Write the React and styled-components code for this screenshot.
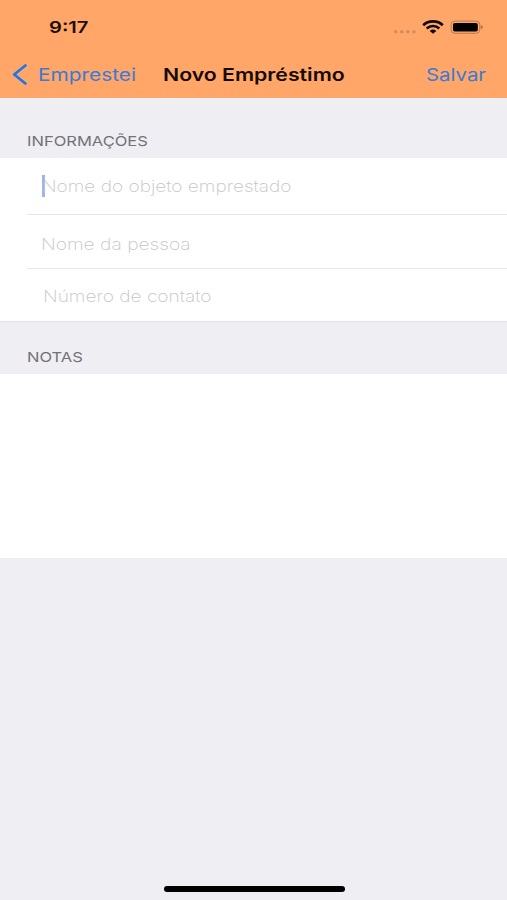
import React from "react";
import styled, { createGlobalStyle } from "styled-components";

const GlobalStyle = createGlobalStyle`
  * { box-sizing: border-box; }
  body { margin: 0; background: #efeef3; }
`;

const Screen = styled.main`
  display: flex;
  flex-direction: column;
  width: 507px;
  height: 900px;
  overflow: hidden;
  background: #efeef3;
  font-family: Inter, "Liberation Sans", sans-serif;
`;

const Header = styled.header`
  height: 98px;
  background: #ffa668;
  border-bottom: 1px solid #f3a678;
`;

const StatusBar = styled.div`
  display: flex;
  align-items: center;
  height: 54px;
  padding: 0 23px 0 49px;
`;

const NavBar = styled.nav`
  display: grid;
  grid-template-columns: 163px 263px 1fr;
  align-items: center;
  height: 41px;
`;

const Wide = styled.span`
  display: inline-block;
  white-space: nowrap;
  transform: scaleX(${(p) => p.$stretch});
  transform-origin: left center;
`;

const Clock = styled(Wide)`
  margin-right: auto;
  font-size: 16.5px;
  font-weight: 600;
  line-height: 20px;
  color: #1c0f06;
`;

const StatusIcons = styled.svg`
  display: block;
  width: 92px;
  height: 20px;
`;

const NavButton = styled.button`
  display: flex;
  align-items: center;
  gap: 10px;
  padding: 0 0 0 ${(p) => p.$inset || 0}px;
  border: 0;
  background: none;
  font: 400 17.5px/22px Inter, "Liberation Sans", sans-serif;
  color: #3a7bd5;
`;

const Chevron = styled.svg`
  display: block;
  width: 16px;
  height: 22px;
`;

const Title = styled.h1`
  margin: 0;
  font-size: 17.5px;
  font-weight: 600;
  line-height: 22px;
  color: #160b04;
`;

const SectionTitle = styled.h2`
  height: ${(p) => p.$height}px;
  margin: 0;
  padding: ${(p) => p.$top}px 0 0 27px;
  font-size: 13.6px;
  font-weight: 400;
  line-height: 18px;
  color: #737277;
`;

const Fields = styled.div`
  height: 164px;
  background: #fff;
  border-bottom: 1px solid #e2e2e5;
`;

const Field = styled.div`
  display: flex;
  align-items: center;
  height: ${(p) => p.$height}px;
  margin-left: 27px;
  padding: ${(p) => p.$drop || 0}px 0 0 ${(p) => p.$inset}px;
  border-bottom: ${(p) => (p.$last ? "0" : "1px solid #e8e8ea")};
`;

const Caret = styled.span`
  width: 3px;
  height: 22px;
  margin-right: -3px;
  background: #a3b3f0;
`;

const Placeholder = styled(Wide)`
  font-size: 16.5px;
  font-weight: 200;
  line-height: 22px;
  color: #c6c6c8;
`;

const Notes = styled.div`
  height: 184px;
  background: #fff;
`;

const HomeIndicator = styled.div`
  width: 181px;
  height: 6px;
  margin: auto 0 8px 164px;
  border-radius: 3px;
  background: #000;
`;

export default function App() {
  return (
    <>
      <GlobalStyle />
      <Screen>
        <Header>
          <StatusBar>
            <Clock $stretch={1.22}>9:17</Clock>
            <StatusIcons viewBox="0 0 92 20">
              <g fill="#d08c5a">
                <circle cx="3.7" cy="14.7" r="1.7" />
                <circle cx="9.8" cy="14.7" r="1.7" />
                <circle cx="15.9" cy="14.7" r="1.7" />
                <circle cx="22" cy="14.7" r="1.7" />
              </g>
              <g fill="none" stroke="#120904" strokeWidth="2.6">
                <path d="M31.2 8.2C36.5 3.1 45.5 3.1 50.8 8.2" />
                <path d="M34.7 11.5C38.2 8.2 43.8 8.2 47.3 11.5" />
              </g>
              <path d="M37.7 13.9Q41 11.3 44.3 13.9L41 16.8Z" fill="#120904" />
              <rect x="59.2" y="4.1" width="28.6" height="12.2" rx="3.6" fill="none" stroke="#b97a4d" />
              <rect x="61" y="6" width="24.8" height="8.6" rx="1.8" fill="#000" />
              <path d="M88.9 8.3Q90.8 9 90.8 10.2T88.9 12.1Z" fill="#a96c43" />
            </StatusIcons>
          </StatusBar>
          <NavBar>
            <NavButton $inset={12}>
              <Chevron viewBox="0 0 16 22">
                <path d="M13.4 1.5L2.2 10.5L13.4 19.5" fill="none" stroke="#1979ec" strokeWidth="2.7" strokeLinecap="round" strokeLinejoin="round" />
              </Chevron>
              <Wide $stretch={1.19}>Emprestei</Wide>
            </NavButton>
            <Title><Wide $stretch={1.215}>Novo Empréstimo</Wide></Title>
            <NavButton><Wide $stretch={1.165}>Salvar</Wide></NavButton>
          </NavBar>
        </Header>
        <SectionTitle $height={60} $top={34}><Wide $stretch={1.215}>INFORMAÇÕES</Wide></SectionTitle>
        <Fields>
          <Field $height={57} $inset={15}>
            <Caret />
            <Placeholder $stretch={1.156}>Nome do objeto emprestado</Placeholder>
          </Field>
          <Field $height={54} $inset={14} $drop={4}>
            <Placeholder $stretch={1.163}>Nome da pessoa</Placeholder>
          </Field>
          <Field $height={52} $inset={16} $drop={2} $last>
            <Placeholder $stretch={1.158}>Número de contato</Placeholder>
          </Field>
        </Fields>
        <SectionTitle $height={52} $top={26}><Wide $stretch={1.215}>NOTAS</Wide></SectionTitle>
        <Notes />
        <HomeIndicator />
      </Screen>
    </>
  );
}
